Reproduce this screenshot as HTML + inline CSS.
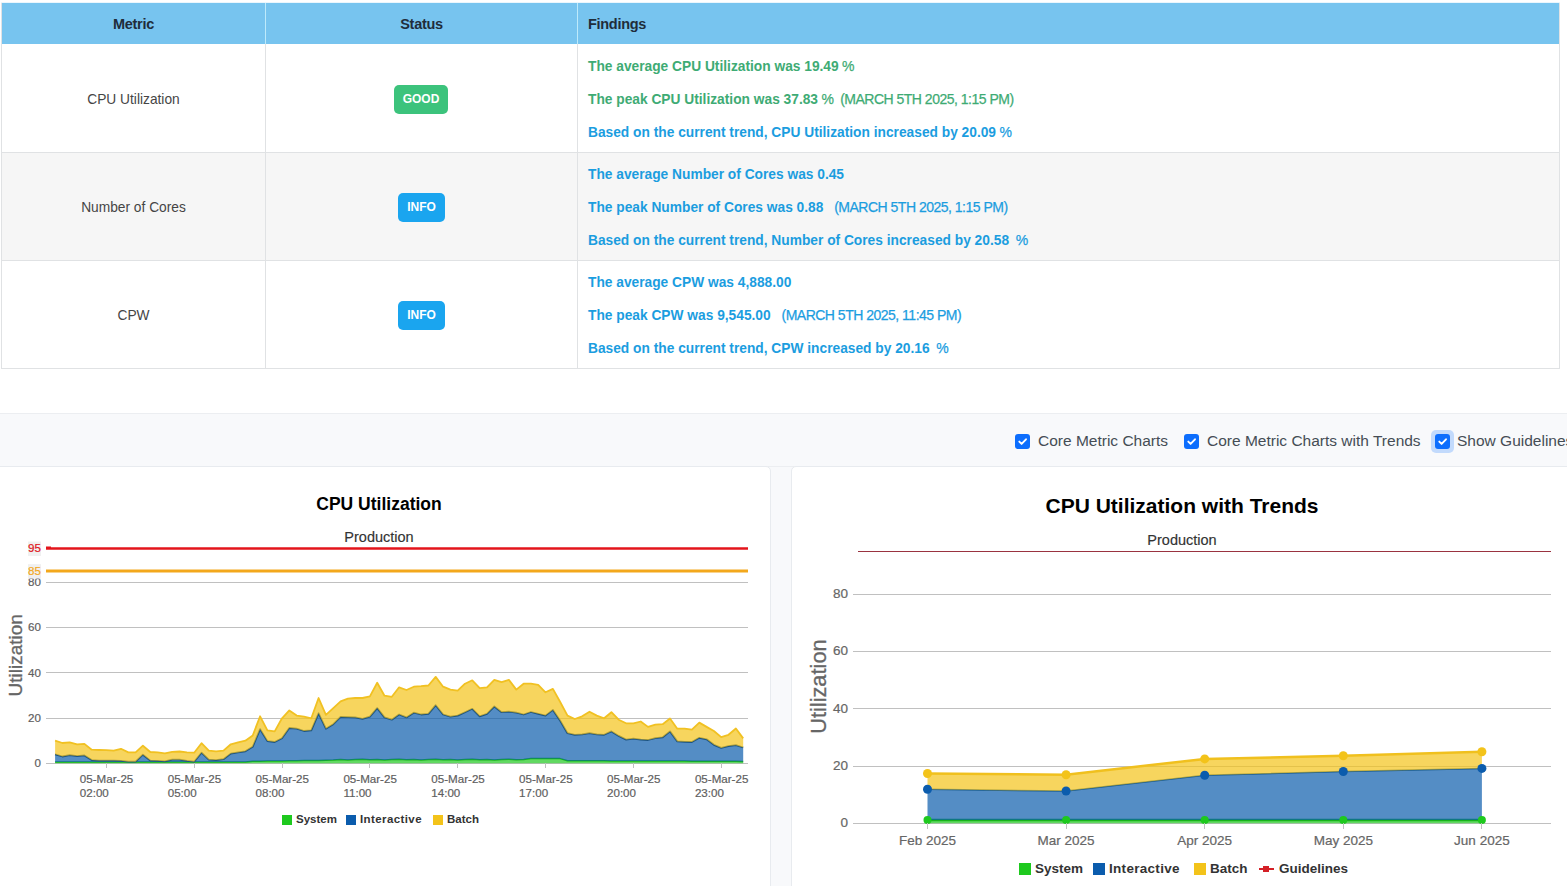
<!DOCTYPE html>
<html>
<head>
<meta charset="utf-8">
<style>
html,body{margin:0;padding:0;}
body{width:1567px;height:886px;overflow:hidden;position:relative;background:#fff;font-family:"Liberation Sans",sans-serif;}
.a{position:absolute;}
.hdr{left:2px;top:3px;width:1557px;height:41px;background:#77c4ef;}
.hl{height:1px;background:#e0e2e4;}
.vl{width:1px;background:#e0e2e4;}
.th{top:4.3px;height:41px;line-height:41px;font-size:14.5px;letter-spacing:-0.3px;font-weight:bold;color:#1f2d3b;}
.row2{left:2px;top:153px;width:1557px;height:107px;background:#f6f6f6;}
.metric{font-size:13.75px;line-height:16px;color:#454545;text-align:center;width:263px;left:2px;}
.badge{height:29px;line-height:29px;border-radius:5px;color:#fff;font-size:12px;font-weight:bold;text-align:center;}
.good{background:#3cc37c;}
.info{background:#1aa5ef;}
.f{left:588px;font-size:14px;letter-spacing:-0.5px;white-space:nowrap;line-height:16px;}
.f b{font-size:13.75px;letter-spacing:0;-webkit-text-stroke:0;}
.f{-webkit-text-stroke:0.25px currentColor;}
.g{color:#3eab74;}
.b{color:#1b9ddf;}
.bar{left:0;top:413px;width:1567px;height:52px;background:#f8f9fb;border-top:1px solid #eceef1;border-bottom:1px solid #eceef1;}
.cbx{width:15px;height:15px;border-radius:3px;background:#0d6efd;}
.cbl{font-size:15.5px;color:#454d55;white-space:nowrap;line-height:18px;}
.lower{left:0;top:467px;width:1567px;height:419px;background:#f8f9fb;}
.card{background:#fff;border:1px solid #e8ebef;border-radius:5px;}
svg text{font-family:"Liberation Sans",sans-serif;}
.ax{font-size:11.6px;fill:#606060;stroke:#606060;stroke-width:0.2px;}
.ax2{font-size:13.5px;fill:#666;stroke:#666;stroke-width:0.2px;}
.t1{font-size:17.5px;font-weight:bold;fill:#000;}
.t2{font-size:21px;font-weight:bold;fill:#000;}
.st{font-size:14.5px;fill:#333;stroke:#333;stroke-width:0.15px;}
.yt{font-size:19px;fill:#666;stroke:#666;stroke-width:0.3px;}
.yt2{font-size:21.8px;fill:#666;stroke:#666;stroke-width:0.3px;}
.lg{font-size:11.5px;font-weight:bold;fill:#333;}
.lg2{font-size:13.5px;font-weight:bold;fill:#333;}
</style>
</head>
<body>
<!-- table -->
<div class="a hdr"></div>
<div class="a row2"></div>
<div class="a vl" style="left:1px;top:3px;height:366px;"></div>
<div class="a vl" style="left:1559px;top:3px;height:366px;"></div>
<div class="a vl" style="left:265px;top:44px;height:324px;"></div>
<div class="a vl" style="left:577px;top:44px;height:324px;"></div>
<div class="a vl" style="left:265px;top:3px;height:41px;background:#bdeafb;"></div>
<div class="a vl" style="left:577px;top:3px;height:41px;background:#bdeafb;"></div>
<div class="a hl" style="left:1px;top:2px;width:1559px;background:#eaf6fd;"></div>
<div class="a hl" style="left:1px;top:152px;width:1559px;"></div>
<div class="a hl" style="left:1px;top:260px;width:1559px;"></div>
<div class="a hl" style="left:1px;top:368px;width:1559px;"></div>

<div class="a th" style="left:2px;width:263px;text-align:center;">Metric</div>
<div class="a th" style="left:266px;width:311px;text-align:center;">Status</div>
<div class="a th" style="left:588px;">Findings</div>

<div class="a metric" style="top:92px;">CPU Utilization</div>
<div class="a metric" style="top:200px;">Number of Cores</div>
<div class="a metric" style="top:308px;">CPW</div>

<div class="a badge good" style="left:394px;top:85px;width:54px;">GOOD</div>
<div class="a badge info" style="left:398px;top:193px;width:47px;">INFO</div>
<div class="a badge info" style="left:398px;top:301px;width:47px;">INFO</div>

<div class="a f g" style="top:58.25px;"><b>The average CPU Utilization was 19.49</b> %</div>
<div class="a f g" style="top:91.25px;"><b>The peak CPU Utilization was 37.83</b> % &nbsp;(MARCH 5TH 2025, 1:15 PM)</div>
<div class="a f b" style="top:124.25px;"><b>Based on the current trend, CPU Utilization increased by 20.09</b> %</div>
<div class="a f b" style="top:166.25px;"><b>The average Number of Cores was 0.45</b></div>
<div class="a f b" style="top:199.25px;"><b>The peak Number of Cores was 0.88</b> &nbsp;<span style="margin-left:4px">(</span>MARCH 5TH 2025, 1:15 PM)</div>
<div class="a f b" style="top:232.25px;"><b>Based on the current trend, Number of Cores increased by 20.58</b> &nbsp;%</div>
<div class="a f b" style="top:274.25px;"><b>The average CPW was 4,888.00</b></div>
<div class="a f b" style="top:307.25px;"><b>The peak CPW was 9,545.00</b> &nbsp;<span style="margin-left:4px">(</span>MARCH 5TH 2025, 11:45 PM)</div>
<div class="a f b" style="top:340.25px;"><b>Based on the current trend, CPW increased by 20.16</b> &nbsp;%</div>

<!-- checkbox bar -->
<div class="a bar"></div>
<div class="a cbx" style="left:1015px;top:434px;"></div><svg class="a" style="left:1015px;top:434px;" width="15" height="15" viewBox="0 0 15 15"><path d="M4.3 7.6 L6.6 9.9 L11 5.3" fill="none" stroke="#fff" stroke-width="1.9" stroke-linecap="round" stroke-linejoin="round"/></svg>
<div class="a cbl" style="left:1038px;top:432px;">Core Metric Charts</div>
<div class="a cbx" style="left:1184px;top:434px;"></div><svg class="a" style="left:1184px;top:434px;" width="15" height="15" viewBox="0 0 15 15"><path d="M4.3 7.6 L6.6 9.9 L11 5.3" fill="none" stroke="#fff" stroke-width="1.9" stroke-linecap="round" stroke-linejoin="round"/></svg>
<div class="a cbl" style="left:1207px;top:432px;">Core Metric Charts with Trends</div>
<div class="a" style="left:1431px;top:430px;width:23px;height:23px;border-radius:5px;background:#c2dafc;"></div>
<div class="a cbx" style="left:1435px;top:434px;"></div><svg class="a" style="left:1435px;top:434px;" width="15" height="15" viewBox="0 0 15 15"><path d="M4.3 7.6 L6.6 9.9 L11 5.3" fill="none" stroke="#fff" stroke-width="1.9" stroke-linecap="round" stroke-linejoin="round"/></svg>
<div class="a cbl" style="left:1457px;top:432px;">Show Guidelines</div>

<!-- lower -->
<div class="a lower"></div>
<div class="a card" style="left:-10px;top:466px;width:779px;height:440px;"></div>
<div class="a card" style="left:791px;top:466px;width:800px;height:440px;"></div>

<svg class="a" style="left:0;top:0;" width="1567" height="886" viewBox="0 0 1567 886">
<line x1="46" y1="763.5" x2="748" y2="763.5" stroke="#c0c0c0" stroke-width="1"/>
<text x="41" y="767.1" text-anchor="end" class="ax">0</text>
<line x1="46" y1="718.5" x2="748" y2="718.5" stroke="#c0c0c0" stroke-width="1"/>
<text x="41" y="721.9" text-anchor="end" class="ax">20</text>
<line x1="46" y1="672.5" x2="748" y2="672.5" stroke="#c0c0c0" stroke-width="1"/>
<text x="41" y="676.7" text-anchor="end" class="ax">40</text>
<line x1="46" y1="627.5" x2="748" y2="627.5" stroke="#c0c0c0" stroke-width="1"/>
<text x="41" y="631.4" text-anchor="end" class="ax">60</text>
<line x1="46" y1="582.5" x2="748" y2="582.5" stroke="#c0c0c0" stroke-width="1"/>
<text x="41" y="586.2" text-anchor="end" class="ax">80</text>
<polygon points="55.1,761.9 62.4,761.9 69.7,761.9 77.1,761.9 84.4,761.9 91.7,761.9 99.0,761.9 106.3,761.9 113.7,761.9 121.0,761.9 128.3,761.9 135.6,761.9 142.9,761.9 150.3,761.9 157.6,761.9 164.9,761.9 172.2,761.9 179.5,761.9 186.9,761.9 194.2,761.9 201.5,761.9 208.8,761.9 216.1,761.9 223.5,761.9 230.8,761.9 238.1,761.9 245.4,761.9 252.7,761.3 260.1,761.2 267.4,761.1 274.7,760.9 282.0,760.9 289.3,760.8 296.7,760.7 304.0,760.5 311.3,760.5 318.6,760.4 325.9,760.2 333.3,760.1 340.6,759.4 347.9,759.9 355.2,759.6 362.5,759.2 369.9,759.8 377.2,759.4 384.5,759.9 391.8,759.6 399.1,759.2 406.5,759.8 413.8,759.4 421.1,759.9 428.4,759.6 435.7,759.2 443.1,759.8 450.4,759.4 457.7,759.9 465.0,759.6 472.3,759.2 479.7,759.8 487.0,759.4 494.3,759.9 501.6,759.6 508.9,759.2 516.3,759.8 523.6,759.4 530.9,758.6 538.2,758.6 545.5,758.6 552.9,758.6 560.2,758.6 567.5,760.7 574.8,760.7 582.1,760.7 589.5,760.8 596.8,760.8 604.1,760.8 611.4,760.9 618.7,760.9 626.1,760.9 633.4,760.9 640.7,761.0 648.0,761.0 655.3,761.0 662.7,761.1 670.0,761.1 677.3,761.1 684.6,761.1 691.9,761.2 699.3,761.2 706.6,761.2 713.9,761.2 721.2,761.3 728.5,761.3 735.9,761.3 743.2,761.4 743.2,763.3 735.9,763.3 728.5,763.3 721.2,763.3 713.9,763.3 706.6,763.3 699.3,763.3 691.9,763.3 684.6,763.3 677.3,763.3 670.0,763.3 662.7,763.3 655.3,763.3 648.0,763.3 640.7,763.3 633.4,763.3 626.1,763.3 618.7,763.3 611.4,763.3 604.1,763.3 596.8,763.3 589.5,763.3 582.1,763.3 574.8,763.3 567.5,763.3 560.2,763.3 552.9,763.3 545.5,763.3 538.2,763.3 530.9,763.3 523.6,763.3 516.3,763.3 508.9,763.3 501.6,763.3 494.3,763.3 487.0,763.3 479.7,763.3 472.3,763.3 465.0,763.3 457.7,763.3 450.4,763.3 443.1,763.3 435.7,763.3 428.4,763.3 421.1,763.3 413.8,763.3 406.5,763.3 399.1,763.3 391.8,763.3 384.5,763.3 377.2,763.3 369.9,763.3 362.5,763.3 355.2,763.3 347.9,763.3 340.6,763.3 333.3,763.3 325.9,763.3 318.6,763.3 311.3,763.3 304.0,763.3 296.7,763.3 289.3,763.3 282.0,763.3 274.7,763.3 267.4,763.3 260.1,763.3 252.7,763.3 245.4,763.3 238.1,763.3 230.8,763.3 223.5,763.3 216.1,763.3 208.8,763.3 201.5,763.3 194.2,763.3 186.9,763.3 179.5,763.3 172.2,763.3 164.9,763.3 157.6,763.3 150.3,763.3 142.9,763.3 135.6,763.3 128.3,763.3 121.0,763.3 113.7,763.3 106.3,763.3 99.0,763.3 91.7,763.3 84.4,763.3 77.1,763.3 69.7,763.3 62.4,763.3 55.1,763.3" fill="#1ec91e" fill-opacity="0.7" stroke="none"/><polyline points="55.1,761.9 62.4,761.9 69.7,761.9 77.1,761.9 84.4,761.9 91.7,761.9 99.0,761.9 106.3,761.9 113.7,761.9 121.0,761.9 128.3,761.9 135.6,761.9 142.9,761.9 150.3,761.9 157.6,761.9 164.9,761.9 172.2,761.9 179.5,761.9 186.9,761.9 194.2,761.9 201.5,761.9 208.8,761.9 216.1,761.9 223.5,761.9 230.8,761.9 238.1,761.9 245.4,761.9 252.7,761.3 260.1,761.2 267.4,761.1 274.7,760.9 282.0,760.9 289.3,760.8 296.7,760.7 304.0,760.5 311.3,760.5 318.6,760.4 325.9,760.2 333.3,760.1 340.6,759.4 347.9,759.9 355.2,759.6 362.5,759.2 369.9,759.8 377.2,759.4 384.5,759.9 391.8,759.6 399.1,759.2 406.5,759.8 413.8,759.4 421.1,759.9 428.4,759.6 435.7,759.2 443.1,759.8 450.4,759.4 457.7,759.9 465.0,759.6 472.3,759.2 479.7,759.8 487.0,759.4 494.3,759.9 501.6,759.6 508.9,759.2 516.3,759.8 523.6,759.4 530.9,758.6 538.2,758.6 545.5,758.6 552.9,758.6 560.2,758.6 567.5,760.7 574.8,760.7 582.1,760.7 589.5,760.8 596.8,760.8 604.1,760.8 611.4,760.9 618.7,760.9 626.1,760.9 633.4,760.9 640.7,761.0 648.0,761.0 655.3,761.0 662.7,761.1 670.0,761.1 677.3,761.1 684.6,761.1 691.9,761.2 699.3,761.2 706.6,761.2 713.9,761.2 721.2,761.3 728.5,761.3 735.9,761.3 743.2,761.4" fill="none" stroke="#17b41a" stroke-width="1.5" stroke-linejoin="round"/>
<polygon points="55.1,754.3 62.4,756.5 69.7,755.2 77.1,756.1 84.4,755.4 91.7,760.1 99.0,760.6 106.3,760.6 113.7,760.6 121.0,760.8 128.3,761.7 135.6,761.7 142.9,754.7 150.3,760.6 157.6,760.8 164.9,761.3 172.2,759.7 179.5,759.7 186.9,760.8 194.2,761.7 201.5,752.7 208.8,759.7 216.1,760.1 223.5,759.2 230.8,753.6 238.1,752.4 245.4,751.3 252.7,746.8 260.1,729.2 267.4,741.1 274.7,742.0 282.0,738.2 289.3,728.0 296.7,728.7 304.0,731.0 311.3,730.3 318.6,713.3 325.9,728.7 333.3,724.2 340.6,716.9 347.9,717.2 355.2,717.4 362.5,718.8 369.9,716.7 377.2,708.1 384.5,717.4 391.8,719.7 399.1,714.5 406.5,717.4 413.8,712.7 421.1,714.5 428.4,713.8 435.7,705.2 443.1,714.5 450.4,716.7 457.7,715.6 465.0,712.2 472.3,708.8 479.7,716.3 487.0,713.8 494.3,706.5 501.6,712.2 508.9,711.7 516.3,712.7 523.6,714.5 530.9,712.0 538.2,713.8 545.5,715.6 552.9,709.9 560.2,720.8 567.5,733.2 574.8,734.8 582.1,734.4 589.5,733.2 596.8,734.4 604.1,734.8 611.4,731.4 618.7,735.9 626.1,739.6 633.4,738.7 640.7,739.6 648.0,740.0 655.3,738.2 662.7,737.3 670.0,731.4 677.3,741.4 684.6,741.8 691.9,742.0 699.3,737.8 706.6,739.3 713.9,744.8 721.2,747.9 728.5,746.1 735.9,745.2 743.2,747.5 743.2,761.4 735.9,761.3 728.5,761.3 721.2,761.3 713.9,761.2 706.6,761.2 699.3,761.2 691.9,761.2 684.6,761.1 677.3,761.1 670.0,761.1 662.7,761.1 655.3,761.0 648.0,761.0 640.7,761.0 633.4,760.9 626.1,760.9 618.7,760.9 611.4,760.9 604.1,760.8 596.8,760.8 589.5,760.8 582.1,760.7 574.8,760.7 567.5,760.7 560.2,758.6 552.9,758.6 545.5,758.6 538.2,758.6 530.9,758.6 523.6,759.4 516.3,759.8 508.9,759.2 501.6,759.6 494.3,759.9 487.0,759.4 479.7,759.8 472.3,759.2 465.0,759.6 457.7,759.9 450.4,759.4 443.1,759.8 435.7,759.2 428.4,759.6 421.1,759.9 413.8,759.4 406.5,759.8 399.1,759.2 391.8,759.6 384.5,759.9 377.2,759.4 369.9,759.8 362.5,759.2 355.2,759.6 347.9,759.9 340.6,759.4 333.3,760.1 325.9,760.2 318.6,760.4 311.3,760.5 304.0,760.5 296.7,760.7 289.3,760.8 282.0,760.9 274.7,760.9 267.4,761.1 260.1,761.2 252.7,761.3 245.4,761.9 238.1,761.9 230.8,761.9 223.5,761.9 216.1,761.9 208.8,761.9 201.5,761.9 194.2,761.9 186.9,761.9 179.5,761.9 172.2,761.9 164.9,761.9 157.6,761.9 150.3,761.9 142.9,761.9 135.6,761.9 128.3,761.9 121.0,761.9 113.7,761.9 106.3,761.9 99.0,761.9 91.7,761.9 84.4,761.9 77.1,761.9 69.7,761.9 62.4,761.9 55.1,761.9" fill="#0b5cad" fill-opacity="0.7" stroke="none"/><polyline points="55.1,754.3 62.4,756.5 69.7,755.2 77.1,756.1 84.4,755.4 91.7,760.1 99.0,760.6 106.3,760.6 113.7,760.6 121.0,760.8 128.3,761.7 135.6,761.7 142.9,754.7 150.3,760.6 157.6,760.8 164.9,761.3 172.2,759.7 179.5,759.7 186.9,760.8 194.2,761.7 201.5,752.7 208.8,759.7 216.1,760.1 223.5,759.2 230.8,753.6 238.1,752.4 245.4,751.3 252.7,746.8 260.1,729.2 267.4,741.1 274.7,742.0 282.0,738.2 289.3,728.0 296.7,728.7 304.0,731.0 311.3,730.3 318.6,713.3 325.9,728.7 333.3,724.2 340.6,716.9 347.9,717.2 355.2,717.4 362.5,718.8 369.9,716.7 377.2,708.1 384.5,717.4 391.8,719.7 399.1,714.5 406.5,717.4 413.8,712.7 421.1,714.5 428.4,713.8 435.7,705.2 443.1,714.5 450.4,716.7 457.7,715.6 465.0,712.2 472.3,708.8 479.7,716.3 487.0,713.8 494.3,706.5 501.6,712.2 508.9,711.7 516.3,712.7 523.6,714.5 530.9,712.0 538.2,713.8 545.5,715.6 552.9,709.9 560.2,720.8 567.5,733.2 574.8,734.8 582.1,734.4 589.5,733.2 596.8,734.4 604.1,734.8 611.4,731.4 618.7,735.9 626.1,739.6 633.4,738.7 640.7,739.6 648.0,740.0 655.3,738.2 662.7,737.3 670.0,731.4 677.3,741.4 684.6,741.8 691.9,742.0 699.3,737.8 706.6,739.3 713.9,744.8 721.2,747.9 728.5,746.1 735.9,745.2 743.2,747.5" fill="none" stroke="#1d5480" stroke-width="1.8" stroke-linejoin="round"/>
<polygon points="55.1,740.7 62.4,743.0 69.7,742.3 77.1,744.3 84.4,743.9 91.7,749.7 99.0,750.0 106.3,750.2 113.7,750.6 121.0,748.8 128.3,752.4 135.6,752.4 142.9,745.7 150.3,752.0 157.6,752.4 164.9,753.4 172.2,751.8 179.5,751.5 186.9,752.4 194.2,752.7 201.5,743.2 208.8,750.6 216.1,751.3 223.5,750.6 230.8,744.3 238.1,742.3 245.4,740.7 252.7,735.5 260.1,716.3 267.4,730.3 274.7,731.4 282.0,718.3 289.3,710.4 296.7,715.6 304.0,716.7 311.3,718.3 318.6,698.0 325.9,714.9 333.3,708.1 340.6,701.3 347.9,698.6 355.2,698.0 362.5,698.0 369.9,696.4 377.2,682.8 384.5,695.7 391.8,696.8 399.1,687.3 406.5,690.0 413.8,686.7 421.1,686.2 428.4,685.5 435.7,676.9 443.1,686.7 450.4,689.6 457.7,690.7 465.0,683.7 472.3,680.3 479.7,688.2 487.0,687.3 494.3,679.9 501.6,682.1 508.9,679.9 516.3,689.6 523.6,683.7 530.9,683.7 538.2,684.8 545.5,692.3 552.9,688.9 560.2,702.0 567.5,715.6 574.8,719.0 582.1,716.3 589.5,711.7 596.8,715.6 604.1,718.3 611.4,712.2 618.7,719.7 626.1,723.3 633.4,723.3 640.7,721.5 648.0,726.9 655.3,724.6 662.7,724.2 670.0,718.5 677.3,728.7 684.6,728.7 691.9,729.6 699.3,722.6 706.6,726.9 713.9,731.0 721.2,737.1 728.5,734.8 735.9,728.5 743.2,738.4 743.2,747.5 735.9,745.2 728.5,746.1 721.2,747.9 713.9,744.8 706.6,739.3 699.3,737.8 691.9,742.0 684.6,741.8 677.3,741.4 670.0,731.4 662.7,737.3 655.3,738.2 648.0,740.0 640.7,739.6 633.4,738.7 626.1,739.6 618.7,735.9 611.4,731.4 604.1,734.8 596.8,734.4 589.5,733.2 582.1,734.4 574.8,734.8 567.5,733.2 560.2,720.8 552.9,709.9 545.5,715.6 538.2,713.8 530.9,712.0 523.6,714.5 516.3,712.7 508.9,711.7 501.6,712.2 494.3,706.5 487.0,713.8 479.7,716.3 472.3,708.8 465.0,712.2 457.7,715.6 450.4,716.7 443.1,714.5 435.7,705.2 428.4,713.8 421.1,714.5 413.8,712.7 406.5,717.4 399.1,714.5 391.8,719.7 384.5,717.4 377.2,708.1 369.9,716.7 362.5,718.8 355.2,717.4 347.9,717.2 340.6,716.9 333.3,724.2 325.9,728.7 318.6,713.3 311.3,730.3 304.0,731.0 296.7,728.7 289.3,728.0 282.0,738.2 274.7,742.0 267.4,741.1 260.1,729.2 252.7,746.8 245.4,751.3 238.1,752.4 230.8,753.6 223.5,759.2 216.1,760.1 208.8,759.7 201.5,752.7 194.2,761.7 186.9,760.8 179.5,759.7 172.2,759.7 164.9,761.3 157.6,760.8 150.3,760.6 142.9,754.7 135.6,761.7 128.3,761.7 121.0,760.8 113.7,760.6 106.3,760.6 99.0,760.6 91.7,760.1 84.4,755.4 77.1,756.1 69.7,755.2 62.4,756.5 55.1,754.3" fill="#f3c31a" fill-opacity="0.7" stroke="none"/><polyline points="55.1,740.7 62.4,743.0 69.7,742.3 77.1,744.3 84.4,743.9 91.7,749.7 99.0,750.0 106.3,750.2 113.7,750.6 121.0,748.8 128.3,752.4 135.6,752.4 142.9,745.7 150.3,752.0 157.6,752.4 164.9,753.4 172.2,751.8 179.5,751.5 186.9,752.4 194.2,752.7 201.5,743.2 208.8,750.6 216.1,751.3 223.5,750.6 230.8,744.3 238.1,742.3 245.4,740.7 252.7,735.5 260.1,716.3 267.4,730.3 274.7,731.4 282.0,718.3 289.3,710.4 296.7,715.6 304.0,716.7 311.3,718.3 318.6,698.0 325.9,714.9 333.3,708.1 340.6,701.3 347.9,698.6 355.2,698.0 362.5,698.0 369.9,696.4 377.2,682.8 384.5,695.7 391.8,696.8 399.1,687.3 406.5,690.0 413.8,686.7 421.1,686.2 428.4,685.5 435.7,676.9 443.1,686.7 450.4,689.6 457.7,690.7 465.0,683.7 472.3,680.3 479.7,688.2 487.0,687.3 494.3,679.9 501.6,682.1 508.9,679.9 516.3,689.6 523.6,683.7 530.9,683.7 538.2,684.8 545.5,692.3 552.9,688.9 560.2,702.0 567.5,715.6 574.8,719.0 582.1,716.3 589.5,711.7 596.8,715.6 604.1,718.3 611.4,712.2 618.7,719.7 626.1,723.3 633.4,723.3 640.7,721.5 648.0,726.9 655.3,724.6 662.7,724.2 670.0,718.5 677.3,728.7 684.6,728.7 691.9,729.6 699.3,722.6 706.6,726.9 713.9,731.0 721.2,737.1 728.5,734.8 735.9,728.5 743.2,738.4" fill="none" stroke="#f1c122" stroke-width="1.8" stroke-linejoin="round"/>
<line x1="46" y1="548.5" x2="748" y2="548.5" stroke="#e3141b" stroke-width="2.5"/><rect x="46" y="546.5" width="5" height="2" fill="#e3141b"/>
<line x1="46" y1="571.1" x2="748" y2="571.1" stroke="#f3a81c" stroke-width="3"/>
<rect x="28" y="541.5" width="13" height="14.5" fill="#eeeeee" opacity="0.9"/>
<text x="41" y="552.0" text-anchor="end" class="ax" style="fill:#e0141b;stroke:#e0141b">95</text>
<rect x="28" y="564.1" width="13" height="14.5" fill="#eeeeee" opacity="0.9"/>
<text x="41" y="574.6" text-anchor="end" class="ax" style="fill:#f3a81c;stroke:#f3a81c">85</text>
<line x1="106.5" y1="763" x2="106.5" y2="768" stroke="#c0c0c0" stroke-width="1"/>
<text x="79.8" y="783" class="ax">05-Mar-25</text>
<text x="79.8" y="797" class="ax">02:00</text>
<line x1="194.5" y1="763" x2="194.5" y2="768" stroke="#c0c0c0" stroke-width="1"/>
<text x="167.7" y="783" class="ax">05-Mar-25</text>
<text x="167.7" y="797" class="ax">05:00</text>
<line x1="282.5" y1="763" x2="282.5" y2="768" stroke="#c0c0c0" stroke-width="1"/>
<text x="255.5" y="783" class="ax">05-Mar-25</text>
<text x="255.5" y="797" class="ax">08:00</text>
<line x1="369.5" y1="763" x2="369.5" y2="768" stroke="#c0c0c0" stroke-width="1"/>
<text x="343.4" y="783" class="ax">05-Mar-25</text>
<text x="343.4" y="797" class="ax">11:00</text>
<line x1="457.5" y1="763" x2="457.5" y2="768" stroke="#c0c0c0" stroke-width="1"/>
<text x="431.3" y="783" class="ax">05-Mar-25</text>
<text x="431.3" y="797" class="ax">14:00</text>
<line x1="545.5" y1="763" x2="545.5" y2="768" stroke="#c0c0c0" stroke-width="1"/>
<text x="519.1" y="783" class="ax">05-Mar-25</text>
<text x="519.1" y="797" class="ax">17:00</text>
<line x1="633.5" y1="763" x2="633.5" y2="768" stroke="#c0c0c0" stroke-width="1"/>
<text x="607.0" y="783" class="ax">05-Mar-25</text>
<text x="607.0" y="797" class="ax">20:00</text>
<line x1="721.5" y1="763" x2="721.5" y2="768" stroke="#c0c0c0" stroke-width="1"/>
<text x="694.9" y="783" class="ax">05-Mar-25</text>
<text x="694.9" y="797" class="ax">23:00</text>
<text x="379" y="510" text-anchor="middle" class="t1">CPU Utilization</text>
<text x="379" y="542" text-anchor="middle" class="st">Production</text>
<text transform="translate(22,655.3) rotate(-90)" text-anchor="middle" class="yt">Utilization</text>
<rect x="282" y="815" width="10" height="10" fill="#1ec91e"/>
<text x="296" y="823" class="lg">System</text>
<rect x="346" y="815" width="10" height="10" fill="#0b5cad"/>
<text x="360" y="823" class="lg" letter-spacing="0.4">Interactive</text>
<rect x="433" y="815" width="10" height="10" fill="#f3c31a"/>
<text x="447" y="823" class="lg">Batch</text>
<line x1="853" y1="823.5" x2="1551" y2="823.5" stroke="#c0c0c0" stroke-width="1"/>
<text x="848" y="827.1" text-anchor="end" class="ax2">0</text>
<line x1="853" y1="766.5" x2="1551" y2="766.5" stroke="#c0c0c0" stroke-width="1"/>
<text x="848" y="769.9" text-anchor="end" class="ax2">20</text>
<line x1="853" y1="708.5" x2="1551" y2="708.5" stroke="#c0c0c0" stroke-width="1"/>
<text x="848" y="712.7" text-anchor="end" class="ax2">40</text>
<line x1="853" y1="651.5" x2="1551" y2="651.5" stroke="#c0c0c0" stroke-width="1"/>
<text x="848" y="655.4" text-anchor="end" class="ax2">60</text>
<line x1="853" y1="594.5" x2="1551" y2="594.5" stroke="#c0c0c0" stroke-width="1"/>
<text x="848" y="598.2" text-anchor="end" class="ax2">80</text>
<polygon points="927.5,819.9 1066.1,819.9 1204.7,819.9 1343.3,819.9 1481.9,819.9 1481.9,823.3 1343.3,823.3 1204.7,823.3 1066.1,823.3 927.5,823.3" fill="#1ec91e" fill-opacity="0.7" stroke="none"/><polyline points="927.5,819.9 1066.1,819.9 1204.7,819.9 1343.3,819.9 1481.9,819.9" fill="none" stroke="#17b41a" stroke-width="2.5" stroke-linejoin="round"/>
<polygon points="927.5,789.3 1066.1,791.0 1204.7,775.2 1343.3,771.5 1481.9,768.4 1481.9,819.9 1343.3,819.9 1204.7,819.9 1066.1,819.9 927.5,819.9" fill="#0b5cad" fill-opacity="0.7" stroke="none"/><polyline points="927.5,789.3 1066.1,791.0 1204.7,775.2 1343.3,771.5 1481.9,768.4" fill="none" stroke="#1b5d8e" stroke-width="1.5" stroke-linejoin="round"/>
<polygon points="927.5,773.5 1066.1,774.7 1204.7,758.9 1343.3,755.8 1481.9,751.8 1481.9,768.4 1343.3,771.5 1204.7,775.2 1066.1,791.0 927.5,789.3" fill="#f3c31a" fill-opacity="0.7" stroke="none"/><polyline points="927.5,773.5 1066.1,774.7 1204.7,758.9 1343.3,755.8 1481.9,751.8" fill="none" stroke="#f0c01e" stroke-width="2.5" stroke-linejoin="round"/>
<circle cx="927.5" cy="819.9" r="4" fill="#1ec91e"/>
<circle cx="927.5" cy="789.3" r="4.5" fill="#0b5cad"/>
<circle cx="927.5" cy="773.5" r="4.5" fill="#f3c31a"/>
<line x1="927.5" y1="823" x2="927.5" y2="829" stroke="#c0c0c0" stroke-width="1"/>
<circle cx="1066.1" cy="819.9" r="4" fill="#1ec91e"/>
<circle cx="1066.1" cy="791.0" r="4.5" fill="#0b5cad"/>
<circle cx="1066.1" cy="774.7" r="4.5" fill="#f3c31a"/>
<line x1="1066.5" y1="823" x2="1066.5" y2="829" stroke="#c0c0c0" stroke-width="1"/>
<circle cx="1204.7" cy="819.9" r="4" fill="#1ec91e"/>
<circle cx="1204.7" cy="775.2" r="4.5" fill="#0b5cad"/>
<circle cx="1204.7" cy="758.9" r="4.5" fill="#f3c31a"/>
<line x1="1204.5" y1="823" x2="1204.5" y2="829" stroke="#c0c0c0" stroke-width="1"/>
<circle cx="1343.3" cy="819.9" r="4" fill="#1ec91e"/>
<circle cx="1343.3" cy="771.5" r="4.5" fill="#0b5cad"/>
<circle cx="1343.3" cy="755.8" r="4.5" fill="#f3c31a"/>
<line x1="1343.5" y1="823" x2="1343.5" y2="829" stroke="#c0c0c0" stroke-width="1"/>
<circle cx="1481.9" cy="819.9" r="4" fill="#1ec91e"/>
<circle cx="1481.9" cy="768.4" r="4.5" fill="#0b5cad"/>
<circle cx="1481.9" cy="751.8" r="4.5" fill="#f3c31a"/>
<line x1="1481.5" y1="823" x2="1481.5" y2="829" stroke="#c0c0c0" stroke-width="1"/>
<text x="927.5" y="844.5" text-anchor="middle" class="ax2">Feb 2025</text>
<text x="1066.1" y="844.5" text-anchor="middle" class="ax2">Mar 2025</text>
<text x="1204.7" y="844.5" text-anchor="middle" class="ax2">Apr 2025</text>
<text x="1343.3" y="844.5" text-anchor="middle" class="ax2">May 2025</text>
<text x="1481.9" y="844.5" text-anchor="middle" class="ax2">Jun 2025</text>
<rect x="858" y="551" width="693" height="1" fill="#9a3340"/>
<text x="1182" y="513" text-anchor="middle" class="t2">CPU Utilization with Trends</text>
<text x="1182" y="545" text-anchor="middle" class="st">Production</text>
<text transform="translate(826,686.6) rotate(-90)" text-anchor="middle" class="yt2">Utilization</text>
<rect x="1019" y="863" width="12" height="12" fill="#1ec91e"/>
<text x="1035" y="873" class="lg2">System</text>
<rect x="1093" y="863" width="12" height="12" fill="#0b5cad"/>
<text x="1109" y="873" class="lg2" letter-spacing="0.3">Interactive</text>
<rect x="1194" y="863" width="12" height="12" fill="#f3c31a"/>
<text x="1210" y="873" class="lg2">Batch</text>
<line x1="1259" y1="869" x2="1274" y2="869" stroke="#d42027" stroke-width="2"/>
<rect x="1263" y="866" width="6" height="6" fill="#d42027"/>
<text x="1279" y="873" class="lg2">Guidelines</text>
</svg>
</body>
</html>
